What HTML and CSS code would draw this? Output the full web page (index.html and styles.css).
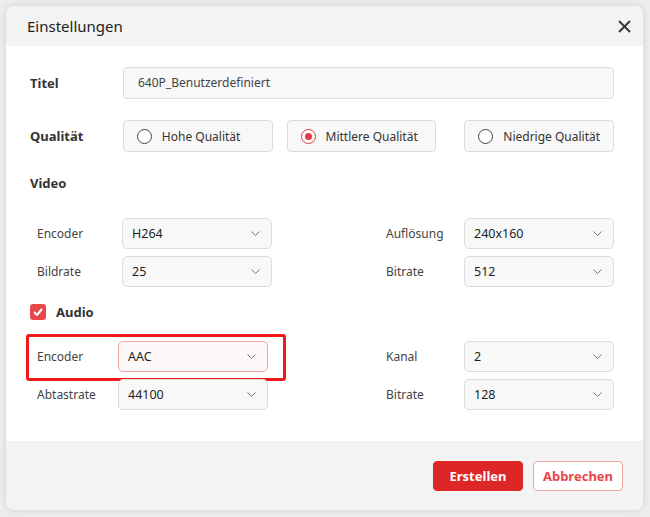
FILE: index.html
```html
<!DOCTYPE html>
<html lang="de">
<head>
  <meta charset="UTF-8">
  <title>Einstellungen</title>
  <link rel="stylesheet" href="styles.css">
</head>
<body>
  <div class="dialog">
    <div class="dialog-header">
      <span class="dialog-title">Einstellungen</span>
      <button class="close-btn" title="Schließen">
        <svg width="13" height="13" viewBox="0 0 13 13"><path d="M1 1L12 12M12 1L1 12" stroke="#333" stroke-width="1.8" fill="none"/></svg>
      </button>
    </div>

    <div class="dialog-body">
      <div class="field-row">
        <label class="main-label">Titel</label>
        <div class="text-input">640P_Benutzerdefiniert</div>
      </div>

      <div class="field-row quality-row">
        <label class="main-label">Qualität</label>
        <div class="radio-box"><span class="radio"></span>Hohe Qualität</div>
        <div class="radio-box checked"><span class="radio"></span>Mittlere Qualität</div>
        <div class="radio-box third"><span class="radio"></span>Niedrige Qualität</div>
      </div>

      <div class="section-title">Video</div>
      <div class="opt-grid video-grid">
        <span class="opt-label">Encoder</span>
        <div class="select">H264<svg class="chev" width="9" height="5" viewBox="0 0 9 5"><path d="M0.5 0.5L4.5 4.5L8.5 0.5" stroke="#777" stroke-width="1" fill="none"/></svg></div>
        <span></span>
        <span class="opt-label">Auflösung</span>
        <div class="select">240x160<svg class="chev" width="9" height="5" viewBox="0 0 9 5"><path d="M0.5 0.5L4.5 4.5L8.5 0.5" stroke="#777" stroke-width="1" fill="none"/></svg></div>

        <span class="opt-label">Bildrate</span>
        <div class="select">25<svg class="chev" width="9" height="5" viewBox="0 0 9 5"><path d="M0.5 0.5L4.5 4.5L8.5 0.5" stroke="#777" stroke-width="1" fill="none"/></svg></div>
        <span></span>
        <span class="opt-label">Bitrate</span>
        <div class="select">512<svg class="chev" width="9" height="5" viewBox="0 0 9 5"><path d="M0.5 0.5L4.5 4.5L8.5 0.5" stroke="#777" stroke-width="1" fill="none"/></svg></div>
      </div>

      <div class="section-title audio-title">
        <span class="checkbox">
          <svg width="10" height="8" viewBox="0 0 10 8"><path d="M1 4L4 7L9 1" stroke="#fff" stroke-width="2" fill="none"/></svg>
        </span>
        Audio
      </div>
      <div class="opt-grid audio-grid">
        <div class="audio-cell highlight">
          <span class="opt-label">Encoder</span>
          <div class="select active">AAC<svg class="chev" width="9" height="5" viewBox="0 0 9 5"><path d="M0.5 0.5L4.5 4.5L8.5 0.5" stroke="#777" stroke-width="1" fill="none"/></svg></div>
        </div>
        <span></span>
        <span class="opt-label">Kanal</span>
        <div class="select">2<svg class="chev" width="9" height="5" viewBox="0 0 9 5"><path d="M0.5 0.5L4.5 4.5L8.5 0.5" stroke="#777" stroke-width="1" fill="none"/></svg></div>

        <div class="audio-cell">
          <span class="opt-label">Abtastrate</span>
          <div class="select">44100<svg class="chev" width="9" height="5" viewBox="0 0 9 5"><path d="M0.5 0.5L4.5 4.5L8.5 0.5" stroke="#777" stroke-width="1" fill="none"/></svg></div>
        </div>
        <span></span>
        <span class="opt-label">Bitrate</span>
        <div class="select">128<svg class="chev" width="9" height="5" viewBox="0 0 9 5"><path d="M0.5 0.5L4.5 4.5L8.5 0.5" stroke="#777" stroke-width="1" fill="none"/></svg></div>
      </div>
    </div>

    <div class="dialog-footer">
      <button class="btn primary">Erstellen</button>
      <button class="btn secondary">Abbrechen</button>
    </div>
  </div>
</body>
</html>
```

FILE: styles.css
```css
body {
  margin: 0;
  padding: 6px;
  background-color: #ececec;
  font-family: "Noto Sans", "Open Sans", sans-serif;
  color: #333;
}

.dialog {
  width: 637px;
  height: 504px;
  background-color: #fff;
  border-radius: 8px;
  box-shadow: 0 0 6px rgba(0, 0, 0, 0.12);
  display: flex;
  flex-direction: column;
  overflow: hidden;
}

.dialog-header {
  height: 40px;
  background-color: #f3f3f3;
  display: flex;
  align-items: center;
  justify-content: space-between;
  padding: 0 12px 0 21px;
}

.dialog-title {
  font-size: 15px;
  color: #222;
}

.close-btn {
  border: none;
  background: none;
  padding: 0;
  width: 13px;
  height: 13px;
  cursor: pointer;
  display: flex;
}

.dialog-body {
  flex: 1;
  padding: 21px 29px 0 24px;
}

.field-row {
  display: flex;
  align-items: center;
}

.quality-row {
  margin-top: 21px;
}

.main-label {
  width: 93px;
  font-size: 13px;
  font-weight: bold;
}

.text-input {
  flex: 1;
  height: 32px;
  box-sizing: border-box;
  border: 1px solid #dcdcdc;
  border-radius: 4px;
  background-color: #f8f8f8;
  font-size: 12px;
  line-height: 30px;
  padding-left: 14px;
  color: #444;
}

.radio-box {
  width: 150px;
  height: 32px;
  box-sizing: border-box;
  border: 1px solid #dcdcdc;
  border-radius: 4px;
  background-color: #f8f8f8;
  font-size: 12px;
  display: flex;
  align-items: center;
  padding-left: 13px;
  margin-right: 14px;
}

.radio-box.third {
  margin-left: 14px;
  margin-right: 0;
}

.radio {
  width: 15px;
  height: 15px;
  box-sizing: border-box;
  border: 1px solid #444;
  border-radius: 50%;
  margin-right: 10px;
  display: flex;
  align-items: center;
  justify-content: center;
  background-color: #fff;
}

.radio-box.checked .radio {
  border: 1.5px solid #e53a3f;
}

.radio-box.checked .radio::after {
  content: "";
  width: 7px;
  height: 7px;
  border-radius: 50%;
  background-color: #e53a3f;
}

.section-title {
  font-size: 13px;
  font-weight: bold;
  line-height: 20px;
  margin-top: 21px;
  display: flex;
  align-items: center;
}

.audio-title {
  margin-top: 15px;
}

.checkbox {
  width: 16px;
  height: 16px;
  border-radius: 3px;
  background-color: #e8474a;
  display: flex;
  align-items: center;
  justify-content: center;
  margin-right: 10px;
}

.opt-grid {
  display: grid;
  grid-template-columns: 85px 150px 1fr 78px 150px;
  grid-auto-rows: 31px;
  row-gap: 7px;
  align-items: center;
  padding-left: 7px;
}

.video-grid {
  margin-top: 25px;
}

.audio-grid {
  margin-top: 19px;
  grid-template-columns: 231px 1fr 78px 150px;
}

.audio-cell {
  display: flex;
  align-items: center;
  height: 31px;
  position: relative;
}

.audio-cell .opt-label {
  width: 81px;
}

.highlight::after {
  content: "";
  position: absolute;
  top: -7px;
  left: -11px;
  right: -18px;
  bottom: -9px;
  border: 3px solid #f01a1a;
  border-radius: 3px;
}

.opt-label {
  font-size: 12px;
  color: #444;
}

.select {
  height: 31px;
  box-sizing: border-box;
  border: 1px solid #dcdcdc;
  border-radius: 5px;
  background-color: #f8f8f8;
  font-size: 12.5px;
  color: #1e1e1e;
  display: flex;
  align-items: center;
  justify-content: space-between;
  padding: 0 11px 0 9px;
  width: 150px;
}

.select.active {
  border-color: #f3a3a3;
  background-color: #fdf8f8;
}

.dialog-footer {
  height: 69px;
  background-color: #f3f3f3;
  display: flex;
  justify-content: flex-end;
  align-items: flex-start;
  padding: 20px 20px 0 0;
  box-sizing: border-box;
}

.btn {
  height: 30px;
  width: 90px;
  border-radius: 4px;
  font-family: "Noto Sans", "Open Sans", sans-serif;
  font-size: 13px;
  font-weight: bold;
  cursor: pointer;
}

.btn.primary {
  background-color: #dd2626;
  border: 1px solid #dd2626;
  color: #fff;
  margin-right: 10px;
}

.btn.secondary {
  background-color: #fff;
  border: 1px solid #f4a3a3;
  color: #e8474a;
}
```
